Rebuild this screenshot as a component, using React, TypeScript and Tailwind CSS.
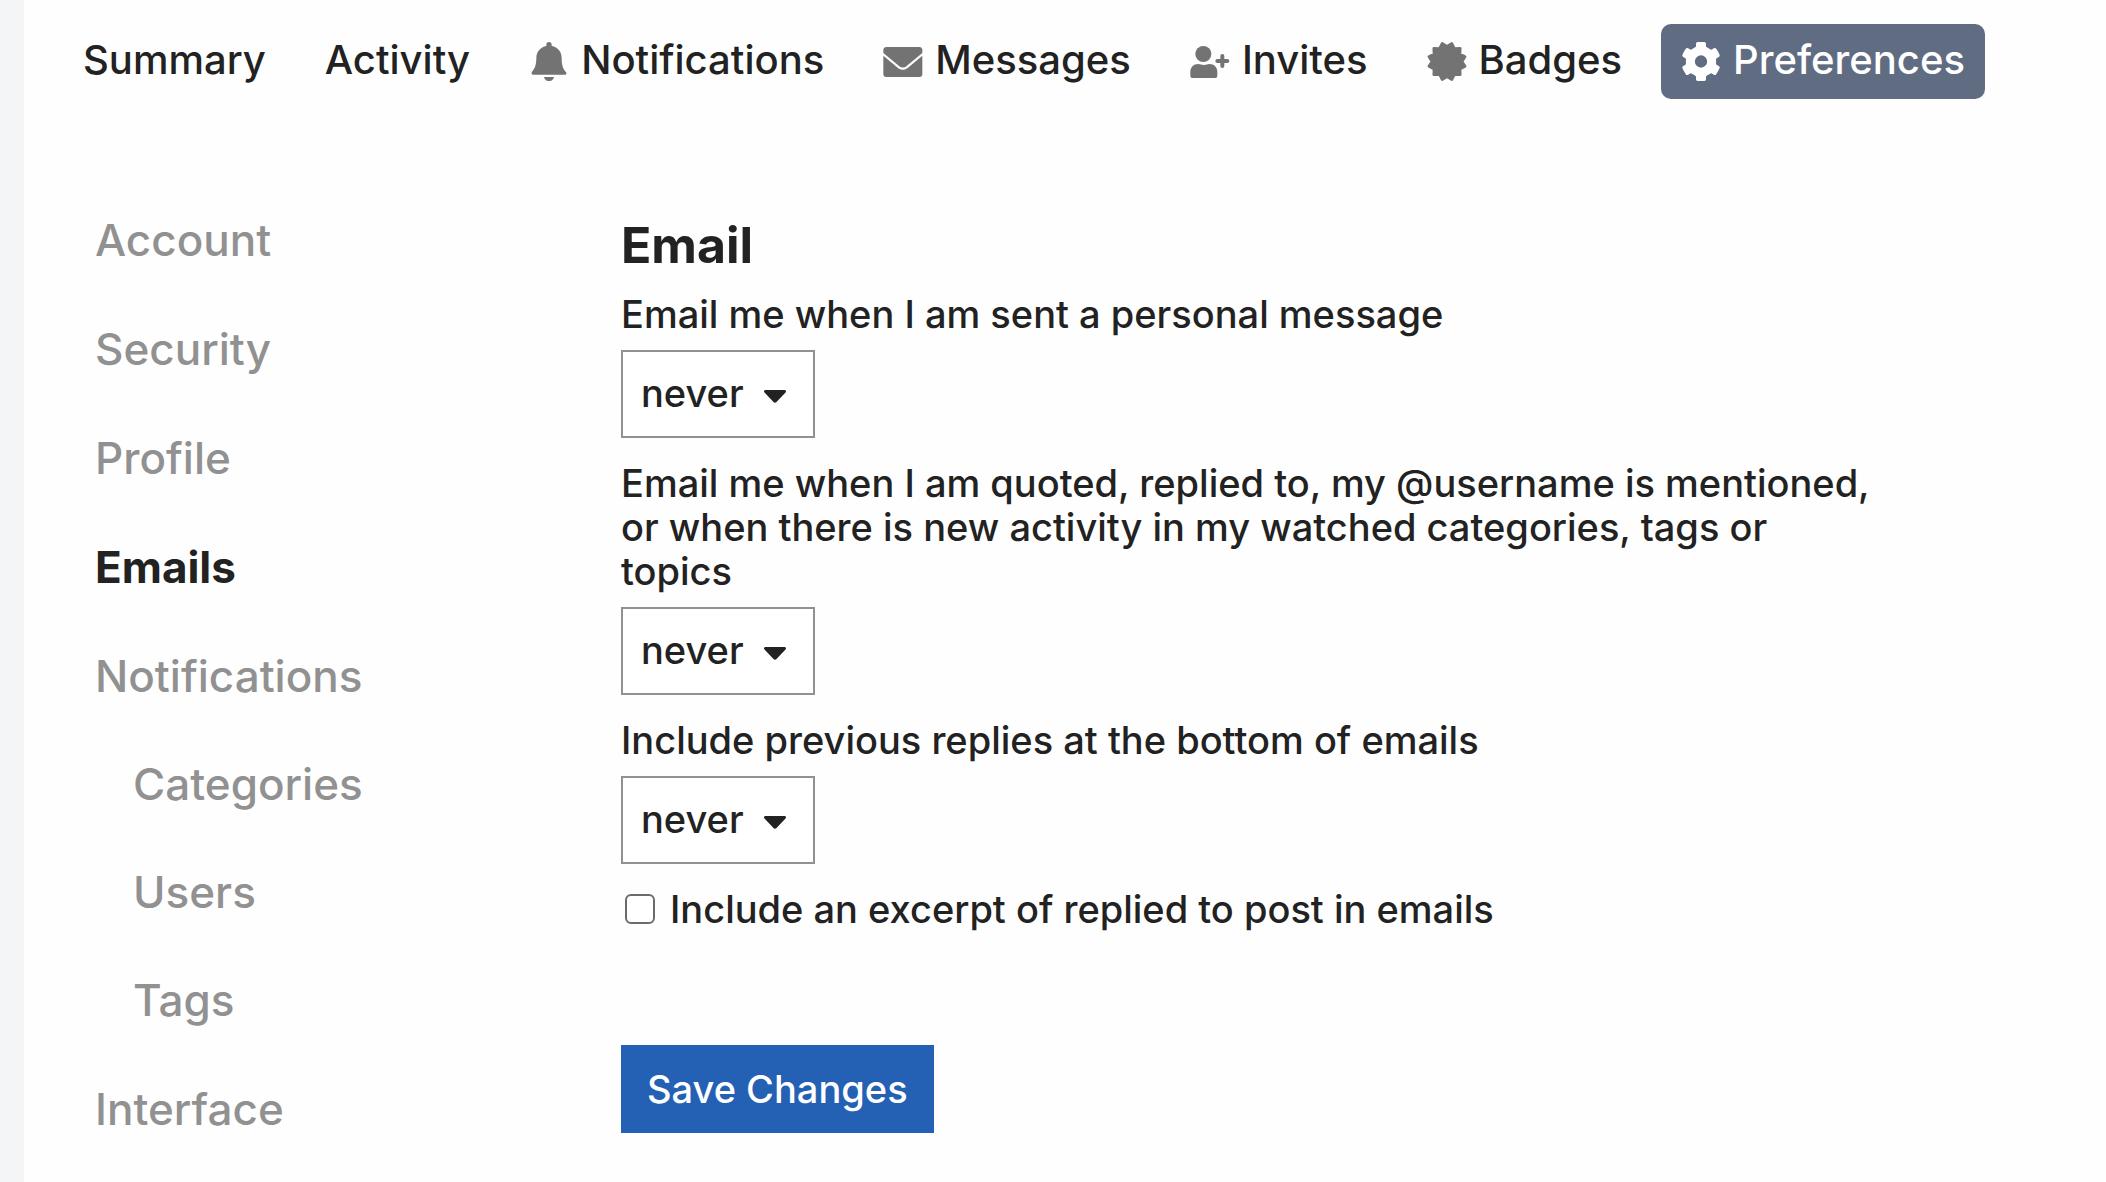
import { useState } from 'react';

type IconProps = { className?: string };

function BellIcon({ className }: IconProps) {
  return (
    <svg viewBox="-7 0 120 117" fill="currentColor" aria-hidden="true" className={className}>
      <path d="M45 12V8a8 8 0 0 1 16 0v4C80 15 91 30 91 48c0 20 3 31 12 41 5 5 1 9.500-4 9.500H6C1 98.500-1 93 2 89c9-10 13-21 13-41 0-18 12-33 30-36Z" />
      <path d="M38 105h30c-1 7-6 12-13 12h-4c-7 0-12-5-13-12Z" />
    </svg>
  );
}

function EnvelopeIcon({ className }: IconProps) {
  return (
    <svg viewBox="-1 -15 120 117" fill="currentColor" aria-hidden="true" className={className}>
      <path d="M10 0h97a10 10 0 0 1 10 10v8L69 58c-6 5-15 5-21 0L0 18v-8A10 10 0 0 1 10 0Z" />
      <path d="M0 26l44 37c8 7 21 7 29 0l44-37v55a9 9 0 0 1-9 9H9a9 9 0 0 1-9-9Z" />
    </svg>
  );
}

function UserPlusIcon({ className }: IconProps) {
  return (
    <svg viewBox="-1 -12 120 117" fill="currentColor" aria-hidden="true" className={className}>
      <circle cx="39" cy="24" r="24" />
      <path d="M24 54c6 0 9 3 17 3s10-3 16-3c15 0 24 10 24 24v12a6 6 0 0 1-6 6H6a6 6 0 0 1-6-6V78c0-14 9-24 24-24Z" />
      <path d="M96 30v30M81 45h30" stroke="currentColor" strokeWidth="12" strokeLinecap="round" />
    </svg>
  );
}

// twelve points, starting half a step off the vertical
const sealPoints = Array.from({ length: 24 }, (_, i) => {
  const r = i % 2 ? 45 : 56;
  const a = ((i * 15 + 15) * Math.PI) / 180;
  return `${(60 + r * Math.sin(a)).toFixed(1)},${(58.5 - r * Math.cos(a)).toFixed(1)}`;
}).join(' ');

function BadgeIcon({ className }: IconProps) {
  return (
    <svg viewBox="0 0 120 117" fill="currentColor" aria-hidden="true" className={className}>
      <polygon points={sealPoints} stroke="currentColor" strokeWidth="8" strokeLinejoin="round" />
    </svg>
  );
}

function GearIcon({ className }: IconProps) {
  return (
    <svg viewBox="-60 -58.5 120 117" fill="currentColor" aria-hidden="true" className={className}>
      <circle r="32" fill="none" stroke="currentColor" strokeWidth="27" />
      {[0, 60, 120, 180, 240, 300].map((deg) => (
        <path key={deg} transform={`rotate(${deg})`} d="M-24-34-15-45v-8q0-5 5-5.500 10-1 20 0 5 .5 5 5.500v8l9 11Z" />
      ))}
    </svg>
  );
}

const tabs = [
  { label: 'Summary' },
  { label: 'Activity' },
  { label: 'Notifications', icon: BellIcon },
  { label: 'Messages', icon: EnvelopeIcon },
  { label: 'Invites', icon: UserPlusIcon },
  { label: 'Badges', icon: BadgeIcon },
  { label: 'Preferences', icon: GearIcon, active: true },
];

const sections = [
  { label: 'Account' },
  { label: 'Security' },
  { label: 'Profile' },
  { label: 'Emails', active: true },
  { label: 'Notifications', children: ['Categories', 'Users', 'Tags'] },
  { label: 'Interface' },
];

const frequencies = ['never', 'always', 'only when away'];

function SelectField({ id, label }: { id: string; label: string }) {
  const [value, setValue] = useState('never');

  return (
    <div className="mb-[23px]">
      <label htmlFor={id} className="block mb-[14px]">{label}</label>
      <div className="relative w-[194px]">
        <select
          id={id}
          value={value}
          onChange={(e) => setValue(e.target.value)}
          className="block w-full h-[88px] pl-[18px] pr-14 pb-0.5 appearance-none bg-white border-2 border-[#919191] text-[#222222]"
        >
          {frequencies.map((f) => (
            <option key={f} value={f}>{f}</option>
          ))}
        </select>
        <svg viewBox="0 0 22 13" fill="currentColor" aria-hidden="true" className="absolute right-[29px] top-10 w-[22px] h-[13px] pointer-events-none">
          <path d="M1.500 0h19c1.400 0 2 1.600 1 2.600l-9 9.400c-.8.900-2.200.9-3 0l-9-9.400C-.5 1.600.1 0 1.500 0Z" />
        </svg>
      </div>
    </div>
  );
}

export default function App() {
  const [excerpt, setExcerpt] = useState(false);

  return (
    <div className="min-h-screen bg-[#fefefe] border-l-[24px] border-[#f4f5f7] font-['Inter',sans-serif] font-medium text-[38px] leading-[44px] text-[#222222]">
      <nav className="flex gap-[19px] pl-[39px] pt-6 text-[40px] whitespace-nowrap">
        {tabs.map(({ label, icon: Icon, active }) => (
          <a
            key={label}
            href="#"
            className={`flex items-center gap-3 h-[75px] px-5 rounded-[10px] ${active ? 'bg-[#606c82] text-white' : ''}`}
          >
            {Icon && <Icon className={`w-[40px] h-[39px] ${active ? 'text-white' : 'text-[#737373]'}`} />}
            <span className="pb-[3px]">{label}</span>
          </a>
        ))}
      </nav>

      <div className="flex pt-[86px]">
        <aside className="w-[597px] shrink-0 pl-[71px] text-[44px]">
          <ul>
            {sections.map((s) => (
              <li key={s.label}>
                <a href="#" className={`flex items-center h-[109px] ${s.active ? 'font-bold' : 'text-[#919191]'}`}>{s.label}</a>
                {s.children && (
                  <ul className="pl-[38px]">
                    {s.children.map((c) => (
                      <li key={c}>
                        <a href="#" className="flex items-center h-[108px] text-[#919191]">{c}</a>
                      </li>
                    ))}
                  </ul>
                )}
              </li>
            ))}
          </ul>
        </aside>

        <form className="max-w-[1256px] pt-[30px]" onSubmit={(e) => e.preventDefault()}>
          <h3 className="mb-[17px] font-bold text-[50px] leading-[60px]">Email</h3>
          <SelectField id="personal" label="Email me when I am sent a personal message" />
          <SelectField
            id="mentions"
            label="Email me when I am quoted, replied to, my @username is mentioned, or when there is new activity in my watched categories, tags or topics"
          />
          <SelectField id="previous" label="Include previous replies at the bottom of emails" />
          <label className="flex items-center gap-[15px] pl-1">
            <input
              type="checkbox"
              checked={excerpt}
              onChange={(e) => setExcerpt(e.target.checked)}
              className="size-[30px] appearance-none rounded-[6px] border-2 border-[#6b6b6b] bg-white checked:bg-[#2460b4]"
            />
            Include an excerpt of replied to post in emails
          </label>
          <button type="submit" className="mt-[114px] h-[88px] px-[26px] bg-[#2460b4] text-white">Save Changes</button>
        </form>
      </div>
    </div>
  );
}
